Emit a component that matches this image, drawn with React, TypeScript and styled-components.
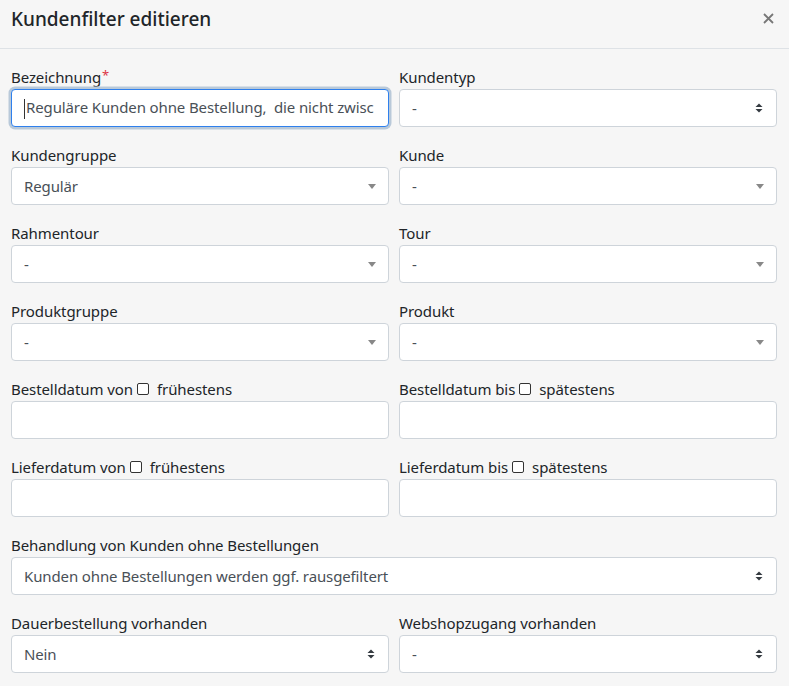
import * as React from "react";
import styled, { createGlobalStyle } from "styled-components";

const GlobalStyle = createGlobalStyle`
	html, body {
		margin: 0;
		padding: 0;
		background: #f6f6f6;
	}
	body {
		font-family: "Noto Sans", "Open Sans", sans-serif;
		color: #212529;
	}
	* { box-sizing: border-box; }
`;

const Modal = styled.div`
	width: 789px;
	height: 686px;
	background: #f6f6f6;
	overflow: hidden;
`;

const Header = styled.div`
	display: flex;
	align-items: center;
	justify-content: space-between;
	height: 49px;
	padding: 0 15px 0 11px;
	border-bottom: 1px solid #dee2e6;
`;

const Title = styled.h5`
	margin: 0;
	font-size: 19px;
	font-weight: 500;
	color: #212529;
	padding-bottom: 11px;
`;

const Close = styled.button`
	border: none;
	background: none;
	padding: 0;
	margin-bottom: 12px;
	cursor: pointer;
	display: flex;
`;

const Body = styled.div`
	display: grid;
	grid-template-columns: 378px 378px;
	column-gap: 10px;
	row-gap: 18px;
	padding: 18px 12px 0 11px;
`;

const Field = styled.div<{ $wide?: boolean }>`
	display: flex;
	flex-direction: column;
	grid-column: ${p => (p.$wide ? "1 / span 2" : "auto")};
`;

const Label = styled.label`
	font-size: 15px;
	line-height: 20px;
	letter-spacing: -0.08px;
	margin-bottom: 2px;
	color: #212529;
	display: flex;
	align-items: center;
	white-space: nowrap;
`;

const Required = styled.span`
	color: #dc3545;
	margin-left: 1px;
	align-self: flex-start;
	font-size: 13px;
	line-height: 16px;
`;

const Check = styled.span`
	display: inline-block;
	width: 12px;
	height: 12px;
	border: 1px solid #333;
	border-radius: 2px;
	background: #fff;
	margin: 0 8px 0 4px;
`;

const Box = styled.div<{ $focus?: boolean }>`
	height: 38px;
	background: #fff;
	border: 1px solid ${p => (p.$focus ? "#2f80ed" : "#ced4da")};
	border-radius: 4px;
	box-shadow: ${p => (p.$focus ? "0 0 0 2.5px #b9c9d9" : "none")};
	display: flex;
	align-items: center;
	padding: 0 12px;
	font-size: 15px;
	letter-spacing: -0.12px;
	color: #495057;
	white-space: pre;
	overflow: hidden;
`;

const Value = styled.span`
	flex: 1;
	overflow: hidden;
`;

const Caret = styled.span`
	width: 0;
	height: 0;
	border-left: 4px solid transparent;
	border-right: 4px solid transparent;
	border-top: 5px solid #888;
`;

const Cursor = styled.span`
	display: inline-block;
	width: 1px;
	height: 20px;
	background: #333;
	vertical-align: middle;
	margin-right: 1px;
`;

function UpDown() {
	return (
		<svg width="8" height="12" viewBox="0 0 8 12" style={{ marginRight: 1 }}>
			<path d="M4 1.5 L7.5 5 H0.5 Z" fill="#343a40" />
			<path d="M4 10.5 L7.5 7 H0.5 Z" fill="#343a40" />
		</svg>
	);
}

type Kind = "input" | "select2" | "custom";

function Control(props: { kind: Kind; value?: string; focus?: boolean }) {
	const { kind, value, focus } = props;
	return (
		<Box $focus={focus}>
			<Value>
				{focus ? <Cursor /> : null}
				{value}
			</Value>
			{kind == "select2" ? <Caret /> : null}
			{kind == "custom" ? <UpDown /> : null}
		</Box>
	);
}

export default function App() {
	return (
		<>
			<GlobalStyle />
			<Modal>
				<Header>
					<Title>Kundenfilter editieren</Title>
					<Close aria-label="Schließen">
						<svg width="11" height="11" viewBox="0 0 11 11">
							<path d="M1 1 L10 10 M10 1 L1 10" stroke="#777" strokeWidth="1.8" />
						</svg>
					</Close>
				</Header>
				<Body>
					<Field>
						<Label>Bezeichnung<Required>*</Required></Label>
						<Control kind="input" focus value="Reguläre Kunden ohne Bestellung,  die nicht zwisc" />
					</Field>
					<Field>
						<Label>Kundentyp</Label>
						<Control kind="custom" value="-" />
					</Field>
					<Field>
						<Label>Kundengruppe</Label>
						<Control kind="select2" value="Regulär" />
					</Field>
					<Field>
						<Label>Kunde</Label>
						<Control kind="select2" value="-" />
					</Field>
					<Field>
						<Label>Rahmentour</Label>
						<Control kind="select2" value="-" />
					</Field>
					<Field>
						<Label>Tour</Label>
						<Control kind="select2" value="-" />
					</Field>
					<Field>
						<Label>Produktgruppe</Label>
						<Control kind="select2" value="-" />
					</Field>
					<Field>
						<Label>Produkt</Label>
						<Control kind="select2" value="-" />
					</Field>
					<Field>
						<Label>Bestelldatum von<Check />frühestens</Label>
						<Control kind="input" />
					</Field>
					<Field>
						<Label>Bestelldatum bis<Check />spätestens</Label>
						<Control kind="input" />
					</Field>
					<Field>
						<Label>Lieferdatum von<Check />frühestens</Label>
						<Control kind="input" />
					</Field>
					<Field>
						<Label>Lieferdatum bis<Check />spätestens</Label>
						<Control kind="input" />
					</Field>
					<Field $wide>
						<Label>Behandlung von Kunden ohne Bestellungen</Label>
						<Control kind="custom" value="Kunden ohne Bestellungen werden ggf. rausgefiltert" />
					</Field>
					<Field>
						<Label>Dauerbestellung vorhanden</Label>
						<Control kind="custom" value="Nein" />
					</Field>
					<Field>
						<Label>Webshopzugang vorhanden</Label>
						<Control kind="custom" value="-" />
					</Field>
				</Body>
			</Modal>
		</>
	);
}
